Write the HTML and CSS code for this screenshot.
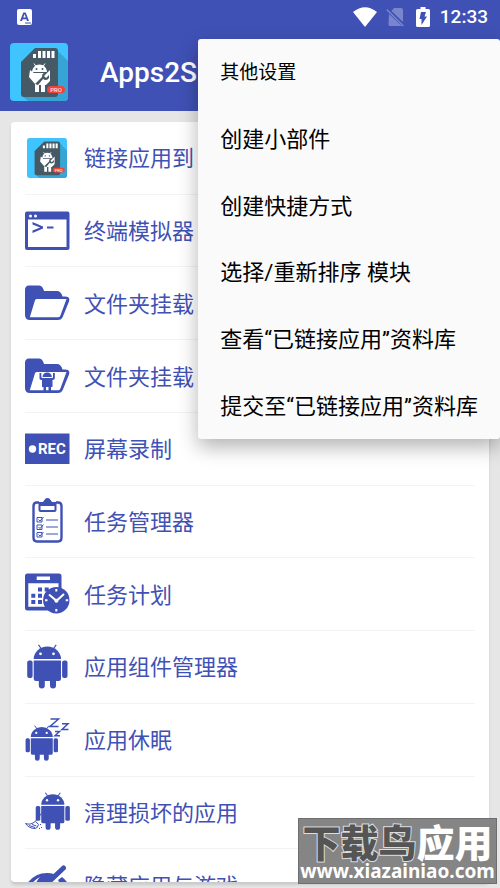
FILE: index.html
```
<!DOCTYPE html>
<html lang="zh-CN">
  <head>
    <meta charset="utf-8">
    <meta name="viewport" content="width=device-width, initial-scale=1">
    <title>Apps2S</title>
    <link rel="stylesheet" href="styles.css">
  </head>
  <body>
    <!-- shared shapes -->
    <svg class="sprite" aria-hidden="true">
      <symbol id="android" viewBox="0 0 46 46">
        <path d="M9.7 15a13.6 12.4 0 0 1 27.3 0z"/>
        <path d="M14.5.8l3 4.200M32.200.8l-3 4.200" fill="none" stroke="currentColor" stroke-width="1.200"/>
        <path d="M9.700 16.500H37V34.700q0 2.300-2.300 2.300H32v4.500a3 3 0 0 1-6 0V37h-5.200v4.500a3 3 0 0 1-6 0V37H12q-2.300 0-2.300-2.300z"/>
        <rect x="3.200" y="16.500" width="5.400" height="17.500" rx="2"/>
        <rect x="38.100" y="16.500" width="5.400" height="17.500" rx="2"/>
        <circle cx="16.500" cy="9.800" r="1.400" fill="#fff"/>
        <circle cx="29.500" cy="9.800" r="1.400" fill="#fff"/>
      </symbol>
      <symbol id="folder" viewBox="0 0 46 46">
        <path fill-rule="evenodd" d="M1 10q0-4.500 4-4.500h10q3 0 4.500 4l.5 1.500h13q4 0 5.500 5.500h2.500q5.500 0 4 5l-6.500 16q-1.500 2.500-4.500 2.500H6q-5 0-5-5zM13 19q-1.500 0-2 1.300L5.800 37.300H34q1.700 0 2.300-1.500L42.500 19z"/>
      </symbol>
      <symbol id="sdcard" viewBox="0 0 58 58">
        <rect width="58" height="58" rx="4" fill="#40c4ff"/>
        <path d="M47 7l11 11v36q0 4-4 4H18l-6-5z" fill="#36a5d6"/>
        <path d="M25 5h20q3 0 3 3v43q0 3-3 3H14q-3 0-3-3V19z" fill="#455a64"/>
        <path d="M23 11h3v4h-3zM28 8h3v7h-3zM32.500 8h3v7h-3zM37 8h3v7h-3zM41.500 8h3v7h-3z" fill="#fff"/>
        <path d="M22 29q1-7.500 7.500-7.500T37 29zM22 30h15l3-3v11l-4 4h-1v7h-4v-7h-2v7h-4v-8l-6-7 1-7 4 3z" fill="#fff"/>
        <path d="M24 20.500l2 3M35 20.500l-2 3" stroke="#fff"/>
        <path d="M25 41l7-7q0-5 5-4l-3 3 2 2 3-3q1 5-4 5l-2-1-5 6z" fill="#455a64"/>
        <circle cx="26.500" cy="26" r="1" fill="#455a64"/>
        <circle cx="32.500" cy="26" r="1" fill="#455a64"/>
        <rect x="37" y="43" width="18" height="7" rx="3.500" fill="#f44336"/>
        <text x="46" y="49" text-anchor="middle" class="pro-label">PRO</text>
      </symbol>
    </svg>

    <header class="header">
      <div class="status-bar">
        <svg class="notice" viewBox="0 0 16 16" aria-hidden="true">
          <rect width="15" height="16" rx="2" fill="#fff"/>
          <path d="M3 12L6.300 3.500h2.400L12 12h-2l-.6-1.800H5.700L5 12zM6.300 8.500h2.500L7.500 5z" fill="#3f51b5"/>
          <path d="M8 14h6" stroke="#3f51b5"/>
        </svg>
        <svg class="wifi" viewBox="0 0 24 20" aria-label="Wi-Fi">
          <path d="M0 5Q12-4.500 24 5L12 20z" fill="#fff"/>
        </svg>
        <svg class="sim" viewBox="0 0 18 20" aria-hidden="true">
          <path d="M8 1h7q2 0 2 2v12L5.500 4zM3 7l13 12H4q-1.500 0-1.500-1.500z" fill="#7986cb"/>
          <path d="M.7 2.500L17.500 19" stroke="#7986cb" stroke-width="1.500"/>
        </svg>
        <svg class="battery" viewBox="0 0 14 20" aria-hidden="true">
          <path d="M4.500 0h5v2h3q1.500 0 1.500 1.500v15q0 1.500-1.500 1.500h-11Q0 20 0 18.500v-15Q0 2 1.500 2h3z" fill="#fff"/>
          <path d="M5 5h5L8.500 9.500H11L5.500 18v-6H3.500z" fill="#3f51b5"/>
        </svg>
        <time class="clock">12:33</time>
      </div>
      <div class="toolbar">
        <svg class="logo" aria-hidden="true"><use href="#sdcard"/></svg>
        <h1 class="title">Apps2S</h1>
      </div>
    </header>

    <main class="content">
      <div class="card">
        <ul class="modules">
          <li class="module"><button class="module-button" type="button">
            <svg class="icon icon-small" viewBox="0 0 58 58"><use href="#sdcard"/></svg>
            <span class="module-name">链接应用到</span>
          </button></li>
          <li class="module"><button class="module-button" type="button">
            <svg class="icon" viewBox="0 0 46 46">
              <path fill-rule="evenodd" d="M3 3.500h40.500q2 0 2 2V40q0 2-2 2H3q-2 0-2-2V5.500q0-2 2-2zM4 11.500V39h38.500V11.500z"/>
              <path d="M8.500 14l10.500 4.600v1.800L8.500 25v-2.500l7.700-3-7.700-3zM23 18.500h6.500v2H23z"/>
              <circle cx="6.500" cy="8" r="1.500" fill="#fff"/>
              <circle cx="11.500" cy="8" r="1.500" fill="#fff"/>
            </svg>
            <span class="module-name">终端模拟器</span>
          </button></li>
          <li class="module"><button class="module-button" type="button">
            <svg class="icon" viewBox="0 0 46 46"><use href="#folder"/></svg>
            <span class="module-name">文件夹挂载</span>
          </button></li>
          <li class="module"><button class="module-button" type="button">
            <svg class="icon" viewBox="0 0 46 46">
              <use href="#folder"/>
              <path d="M18.500 24q.5-4.500 4.700-4.500t4.700 4.500zM18 25h10.500v9H27v4h-2.500v-4H22v4h-2.500v-4H18zM15.500 20h1.800v4.500H18V27h-.700q-1.800 0-1.800-1.800zM29 20h1.800v5.200q0 1.800-2.300 1.800v-2.500h.5z"/>
            </svg>
            <span class="module-name">文件夹挂载</span>
          </button></li>
          <li class="module"><button class="module-button" type="button">
            <svg class="icon" viewBox="0 0 46 46">
              <path d="M1 7.500h44.500V38H1z"/>
              <circle cx="8.500" cy="23" r="3.700" fill="#fff"/>
              <text x="14" y="28" class="rec-label">REC</text>
            </svg>
            <span class="module-name">屏幕录制</span>
          </button></li>
          <li class="module"><button class="module-button" type="button">
            <svg class="icon" viewBox="0 0 46 46">
              <g fill="none" stroke="currentColor">
                <path d="M15 4.500h-2q-3.500 0-3.500 3.500v31.500q0 4 3.500 4h21q3.500 0 3.500-4V8q0-3.500-3.500-3.500h-2" stroke-width="2.400"/>
                <path d="M15.500 5.500h4q.5-3 4-3t4 3h4V12q0 1-1 1h-14q-1 0-1-1z" stroke-width="2"/>
                <path d="M22 22h12M22 29h12M22 36h12" stroke-width="1.200"/>
                <path d="M13 19.500h5v4.500h-5zM13 27h5v4.500h-5zM13 34.500h5V39h-5zM14.500 21.500l1.500 1.500 3.500-4M14.500 29l1.500 1.500 3.500-4M14.500 36.500L16 38l3.500-4"/>
              </g>
              <path d="M15 4h5q.5-4 3.500-4T27 4h5v4H15z"/>
            </svg>
            <span class="module-name">任务管理器</span>
          </button></li>
          <li class="module"><button class="module-button" type="button">
            <svg class="icon" viewBox="0 0 46 46">
              <path fill-rule="evenodd" d="M3.500 2.500H35q2.500 0 2.500 2.500v32q0 2.500-2.500 2.500H3.500Q1 39.500 1 37V5q0-2.500 2.500-2.500zM12.700 5.500V9H26V5.500zM4.300 12.300v23.500h30.200V12.300z"/>
              <path d="M14 16.500h4v4h-4zM20.700 16.500h4v4h-4zM7.300 22.700h4v4h-4zM14 22.700h4v4h-4zM7.300 29h4v4h-4zM14 29h4v4h-4z"/>
              <circle cx="32.300" cy="29.200" r="13.200"/>
              <path d="M25 23.500l7.500 6.300 7.500-6.800" fill="none" stroke="#fff" stroke-width="2"/>
              <circle cx="32.400" cy="29.700" r="2" fill="#fff"/>
              <path d="M31.300 18h2v2.500h-2zM31.300 38h2v2.500h-2zM21 28.300h2.500v2H21zM41.700 28.300h2.500v2h-2.500z" fill="#fff"/>
            </svg>
            <span class="module-name">任务计划</span>
          </button></li>
          <li class="module"><button class="module-button" type="button">
            <svg class="icon" viewBox="0 0 46 46"><use href="#android"/></svg>
            <span class="module-name">应用组件管理器</span>
          </button></li>
          <li class="module"><button class="module-button" type="button">
            <svg class="icon" viewBox="0 0 46 46">
              <use href="#android" x="-1" y="8" width="37" height="37"/>
              <path d="M26.500 2h8l-8.500 7.500h8.500M38 6.800h6l-6 5.700h6.500M31 14.500h4.500L31 18.700h5" fill="none" stroke="currentColor" stroke-width="1.500"/>
            </svg>
            <span class="module-name">应用休眠</span>
          </button></li>
          <li class="module"><button class="module-button" type="button">
            <svg class="icon" viewBox="0 0 46 46">
              <use href="#android" x="9" y="3" width="39" height="39"/>
              <path d="M1.500 34.500q5 2 10-2.200l3 3.200q-1 4-3.500 4-6 0-9.500-5zM11.500 32.300l7-9.300M5 36.500l6 2M8 35.500l4.500 1.500" fill="none" stroke="currentColor"/>
              <path d="M16 35h1v1h-1zM17 38h1v1h-1zM15 39h1v1h-1z"/>
            </svg>
            <span class="module-name">清理损坏的应用</span>
          </button></li>
          <li class="module"><button class="module-button" type="button">
            <svg class="icon" viewBox="0 0 46 46">
              <path d="M2 23Q10 11 23 11q4 0 7 1L16 27l-5-4q2-5 5-8-6 3-9 8zM34 18l4-3q4 3 7 8l-6 5z"/>
              <path d="M39.500 6L12 32" stroke="currentColor" stroke-width="5" stroke-linecap="round"/>
            </svg>
            <span class="module-name">隐藏应用与游戏</span>
          </button></li>
        </ul>
      </div>
    </main>

    <div class="popup" role="menu">
      <button class="popup-item popup-heading" type="button" role="menuitem">其他设置</button>
      <button class="popup-item" type="button" role="menuitem">创建小部件</button>
      <button class="popup-item" type="button" role="menuitem">创建快捷方式</button>
      <button class="popup-item" type="button" role="menuitem">选择/重新排序 模块</button>
      <button class="popup-item" type="button" role="menuitem">查看“已链接应用”资料库</button>
      <button class="popup-item" type="button" role="menuitem">提交至“已链接应用”资料库</button>
    </div>

    <div class="watermark">
      <div class="watermark-name"><span class="watermark-dark">下载鸟</span>应用</div>
      <div class="watermark-url">www.xiazainiao.com</div>
    </div>
  </body>
</html>
```

FILE: styles.css
```
* {
  box-sizing: border-box;
}

body {
  margin: 0;
  height: 100vh;
  display: flex;
  flex-direction: column;
  overflow: hidden;
  position: relative;
  background: #e6e6e6;
  font-family: Roboto, "Noto Sans CJK SC", sans-serif;
}

button {
  border: none;
  background: none;
  padding: 0;
  color: inherit;
  font: inherit;
  text-align: left;
  cursor: pointer;
}

.sprite {
  position: absolute;
  width: 0;
  height: 0;
}

/* header */

.header {
  background: #3f51b5;
  color: #fff;
}

.status-bar {
  display: flex;
  align-items: center;
  height: 33px;
  padding: 0 12px 0 17px;
}

.notice {
  width: 16px;
  height: 16px;
  margin-right: auto;
}

.wifi {
  width: 24px;
  height: 20px;
}

.sim {
  width: 18px;
  height: 20px;
  margin: 0 12px 0 9px;
}

.battery {
  width: 14px;
  height: 20px;
}

.clock {
  margin-left: 10px;
  font-size: 19px;
  font-weight: 500;
}

.toolbar {
  display: flex;
  align-items: center;
  height: 78px;
  padding: 0 10px;
}

.logo {
  width: 58px;
  height: 58px;
}

.title {
  margin: 0 0 0 32px;
  font-size: 28px;
  font-weight: 500;
}

.pro-label {
  fill: #fff;
  font-size: 6px;
}

/* module list */

.content {
  flex: 1;
  min-height: 0;
  padding: 11px 11px 6px;
}

.card {
  height: 100%;
  overflow: hidden;
  background: #fff;
  border-radius: 4px;
  box-shadow: 0 3px 3px rgba(0, 0, 0, 0.12);
}

.modules {
  display: grid;
  grid-auto-rows: 1fr;
  height: 800px;
  margin: 0;
  padding: 0 14px;
  list-style: none;
}

.module {
  border-bottom: 1px solid #f3f3f3;
}

.module-button {
  display: flex;
  align-items: center;
  gap: 14px;
  width: 100%;
  height: 100%;
  color: #3f51b5;
  font-size: 22px;
}

.module-name {
  padding-bottom: 3px;
}

.icon {
  flex: none;
  width: 46px;
  height: 46px;
  margin-left: -1px;
  fill: currentColor;
}

.icon-small {
  width: 40px;
  height: 40px;
  margin: 0 3px 0 2px;
}

.rec-label {
  fill: #fff;
  font-size: 15px;
  font-weight: 700;
}

/* overflow menu */

.popup {
  position: absolute;
  top: 39px;
  right: 0;
  display: grid;
  grid-auto-rows: 1fr;
  height: 400px;
  padding: 0 22px;
  background: #fafafa;
  border-radius: 3px;
  box-shadow: 0 8px 20px rgba(0, 0, 0, 0.3);
  color: #000;
}

.popup-item {
  padding-bottom: 4px;
  font-size: 22px;
  white-space: nowrap;
}

.popup-heading {
  font-size: 19px;
}

/* site badge */

.watermark {
  position: absolute;
  right: 3px;
  bottom: 4px;
  width: 199px;
  height: 66px;
  padding-top: 3px;
  background: #858585;
  border: 1px solid #6e6e6e;
  color: #fff;
  text-align: center;
  white-space: nowrap;
}

.watermark-name {
  font-family: "Noto Sans CJK SC", sans-serif;
  font-size: 38px;
  font-weight: 900;
  line-height: 38px;
}

.watermark-dark {
  color: #555;
  -webkit-text-stroke: 2px #ddd;
  paint-order: stroke fill;
}

.watermark-url {
  font-family: "Noto Sans", sans-serif;
  font-size: 19px;
  font-weight: 700;
  line-height: 22px;
}
```
